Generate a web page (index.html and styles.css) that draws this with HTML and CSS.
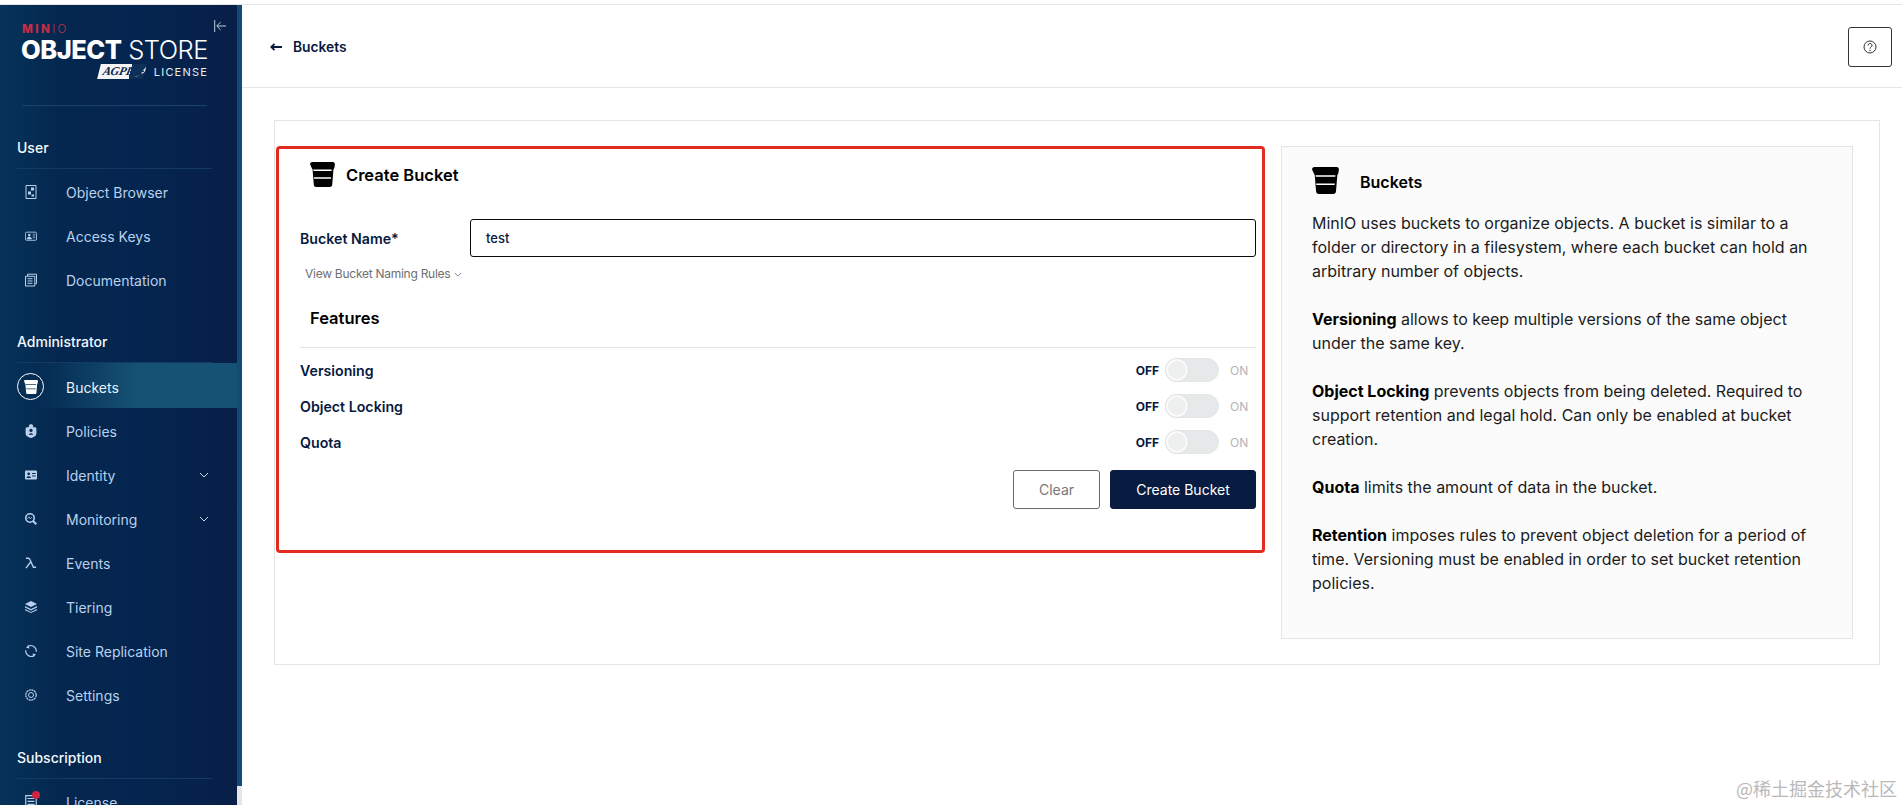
FILE: index.html
```
<!DOCTYPE html>
<html lang="en">
<head>
<meta charset="utf-8">
<title>MinIO Console - Create Bucket</title>
<link rel="stylesheet" href="styles.css">
</head>
<body>
<svg class="defs" width="0" height="0" aria-hidden="true">
  <symbol id="bucket" viewBox="0 0 25 25">
    <path fill="currentColor" d="M2.200 0h20.600c1.300 0 2.200 1 2.100 2.300l-.5 3.500c-.1.600-.4 1-.9 1.300l-1.300 15.600c-.1 1.300-1.100 2.300-2.400 2.300H6.200c-1.300 0-2.300-1-2.400-2.300L2.500 7.100c-.5-.3-.8-.7-.9-1.300L.1 2.300C0 1 .9 0 2.200 0z"/>
    <path class="bucket-gap" d="M3.300 7.600h18.400l-.15 1.500H3.450zM3.900 15.200h17.200l-.15 1.500H4.050z"/>
  </symbol>
  <symbol id="chev" viewBox="0 0 10 6"><path d="M1 1l4 4 4-4" fill="none" stroke="currentColor" stroke-width="1"/></symbol>
</svg>
<div class="topline"></div>
<div class="app">
  <aside class="sidebar">
    <div class="sidebar-inner">
      <div class="brand">
        <svg class="collapse" viewBox="0 0 12 12"><path d="M.7 0v12M12 6H3M6.500 2.200L2.700 6l3.800 3.800" fill="none" stroke="currentColor" stroke-width="1"/></svg>
        <div class="brand-minio"><b>MIN</b>IO</div>
        <div class="brand-name"><b>OBJECT</b> <span>STORE</span></div>
        <div class="brand-license">
          <span class="agpl"><i>AGPL</i><svg viewBox="0 0 16 14"><path d="M1 13C7 12 13 8 15 1c-1 0-3 1-4 2 0 1-1 2-2 3 1 0 2 0 2 1-1 1-2 1-3 1 1 1 1 1 1 2-2 1-5 2-8 3z" fill="#fff"/></svg></span>
          <span class="license">LICENSE</span>
        </div>
      </div>
      <div class="section section-first">User</div>
      <nav>
        <a class="item"><span class="ico"><svg viewBox="0 0 12 14"><path d="M1 .5h10v13H1z" fill="none" stroke="currentColor"/><path d="M6 2.500h3v3H6zM3 6.500h3v3H3zM6.500 9.500h2.500v2H6.500z" fill="currentColor"/></svg></span>Object Browser</a>
        <a class="item"><span class="ico"><svg viewBox="0 0 14 12"><rect x=".5" y="1.500" width="13" height="9.500" rx="1.500" fill="none" stroke="currentColor"/><circle cx="5" cy="4.800" r="1.500" fill="currentColor"/><path d="M2.500 9.500c0-3 5-3 5 0zM9 4h3M9 6h3M9 8h3" fill="currentColor" stroke="currentColor" stroke-width=".8"/></svg></span>Access Keys</a>
        <a class="item"><span class="ico"><svg viewBox="0 0 12 13"><path d="M2.500 2.500V.7h9v9.500H10M.5 2.800h9.300v9.700H.5z" fill="none" stroke="currentColor"/><path d="M2.500 5.200h5M2.500 7.500h5M2.500 9.800h5" stroke="currentColor"/></svg></span>Documentation</a>
      </nav>
      <div class="section section-next">Administrator</div>
      <nav>
        <a class="item active"><span class="ico-ring"><svg><use href="#bucket"/></svg></span>Buckets</a>
        <a class="item"><span class="ico"><svg viewBox="0 0 10 13"><path d="M3 3V2c0-2.300 4-2.300 4 0v1h1.500c1 0 1.500.6 1.500 1.500V9c0 2-3 3.500-5 4-2-.5-5-2-5-4V4.500C0 3.600.5 3 1.500 3z" fill="currentColor"/><circle cx="5" cy="6" r="1.500" fill="#0a2a52"/><path d="M3 10c0-2 4-2 4 0z" fill="#0a2a52"/></svg></span>Policies</a>
        <a class="item"><span class="ico"><svg viewBox="0 0 12 9"><path d="M1 0h10a1 1 0 0 1 1 1v7a1 1 0 0 1-1 1H1a1 1 0 0 1-1-1V1a1 1 0 0 1 1-1z" fill="currentColor"/><circle cx="3.700" cy="3.300" r="1.400" fill="#0a2a52"/><path d="M1.500 7.500c0-2.400 4.400-2.400 4.400 0zM7 2.500h3.700v1H7zM7 5h3.700v1H7z" fill="#0a2a52"/></svg></span>Identity<svg class="chev"><use href="#chev"/></svg></a>
        <a class="item"><span class="ico"><svg viewBox="0 0 12 12"><circle cx="5" cy="5" r="4.200" fill="none" stroke="currentColor" stroke-width="1.600"/><path d="M8 8l3.300 3.300" stroke="currentColor" stroke-width="2"/><path d="M2.500 5.500L4 3.800l1.200 2L7 4" fill="none" stroke="currentColor" stroke-width=".8"/></svg></span>Monitoring<svg class="chev"><use href="#chev"/></svg></a>
        <a class="item"><span class="ico"><svg viewBox="0 0 12 11"><path d="M1 .7h2.200c1 0 1.400.5 1.800 1.500l3.400 7.600h2.600M5.800 4.200L1 10.700" fill="none" stroke="currentColor" stroke-width="1.400"/></svg></span>Events</a>
        <a class="item"><span class="ico"><svg viewBox="0 0 12 12"><path d="M6 0l6 3-6 3-6-3z" fill="currentColor"/><path d="M0 5l6 3 6-3v1.500L6 9.500 0 6.500zM0 8l6 3 6-3v1.200L6 12 0 9.200z" fill="currentColor"/></svg></span>Tiering</a>
        <a class="item"><span class="ico"><svg viewBox="0 0 12 12"><path d="M9.600 2.200A5.400 5.400 0 0 0 2.800 1.600M.7 5.200a5.400 5.400 0 0 0 1.600 4.500M2.400 9.800A5.400 5.400 0 0 0 9.200 10.400M11.300 6.800A5.400 5.400 0 0 0 9.700 2.300" fill="none" stroke="currentColor" stroke-width="1.200"/><path d="M3.600 0L1 2.800l3.400.8zM8.400 12L11 9.200l-3.400-.8z" fill="currentColor"/></svg></span>Site Replication</a>
        <a class="item"><span class="ico"><svg viewBox="0 0 12 12"><circle cx="6" cy="6" r="5.200" fill="none" stroke="currentColor" stroke-width="1.200" stroke-dasharray="2.200 .5"/><circle cx="6" cy="6" r="2.500" fill="none" stroke="currentColor"/></svg></span>Settings</a>
      </nav>
      <div class="section section-last">Subscription</div>
      <nav>
        <a class="item"><span class="ico ico-badge"><svg viewBox="0 0 10 12"><path d="M.5.500h9v11h-9z" fill="none" stroke="currentColor"/><path d="M2 3h6M2 5.500h6M2 8h6" stroke="currentColor"/></svg><em class="dot"></em></span>License</a>
      </nav>
    </div>
    <div class="rail"><div class="thumb"></div></div>
  </aside>
  <main class="main">
    <header class="header">
      <a class="back"><svg viewBox="0 0 12 8"><path d="M12 4H2M4.500 .8L1.200 4l3.300 3.200" fill="none" stroke="currentColor" stroke-width="1.800"/></svg>Buckets</a>
      <button class="help" type="button" aria-label="Help"><svg viewBox="0 0 14 14"><circle cx="7" cy="7" r="6" fill="none" stroke="currentColor"/><path d="M5 5.500a2 2 0 1 1 3 1.700c-.7.400-1 .8-1 1.500" fill="none" stroke="currentColor"/><circle cx="7" cy="10.500" r=".7" fill="currentColor"/></svg></button>
    </header>
    <section class="panel">
      <form class="form">
        <h2 class="form-title"><svg class="bucket-lg"><use href="#bucket"/></svg>Create Bucket</h2>
        <div class="name-row">
          <label class="row-label" for="bucket-name">Bucket Name*</label>
          <div class="input" id="bucket-name">test</div>
        </div>
        <div class="rules">View Bucket Naming Rules<svg><use href="#chev"/></svg></div>
        <h3 class="features">Features</h3>
        <div class="rule"></div>
        <div class="toggle-row"><span class="row-label">Versioning</span><span class="off">OFF</span><span class="track"><span class="knob"></span></span><span class="on">ON</span></div>
        <div class="toggle-row"><span class="row-label">Object Locking</span><span class="off">OFF</span><span class="track"><span class="knob"></span></span><span class="on">ON</span></div>
        <div class="toggle-row"><span class="row-label">Quota</span><span class="off">OFF</span><span class="track"><span class="knob"></span></span><span class="on">ON</span></div>
        <div class="actions">
          <button class="btn btn-clear" type="button">Clear</button>
          <button class="btn btn-primary" type="button">Create Bucket</button>
        </div>
      </form>
      <aside class="info">
        <h2 class="info-title"><svg class="bucket-info"><use href="#bucket"/></svg><span>Buckets</span></h2>
        <p>MinIO uses buckets to organize objects. A bucket is similar to a folder or directory in a filesystem, where each bucket can hold an arbitrary number of objects.</p>
        <p><b>Versioning</b> allows to keep multiple versions of the same object under the same key.</p>
        <p><b>Object Locking</b> prevents objects from being deleted. Required to support retention and legal hold. Can only be enabled at bucket creation.</p>
        <p><b>Quota</b> limits the amount of data in the bucket.</p>
        <p><b>Retention</b> imposes rules to prevent object deletion for a period of time. Versioning must be enabled in order to set bucket retention policies.</p>
      </aside>
    </section>
  </main>
</div>
<div class="watermark">@稀土掘金技术社区</div>
</body>
</html>
```
FILE: styles.css
```
* { box-sizing: border-box; }
html, body { margin: 0; height: 805px; overflow: hidden; background: #fff; }
body { font-family: Inter, "Noto Sans", sans-serif; color: #07193e; position: relative; }
.defs { position: absolute; }
.topline { height: 5px; border-bottom: 1px solid #e5e5e5; }
.app { display: flex; height: 800px; }
.bucket-gap { fill: var(--gap, #fff); }

.sidebar { width: 242px; flex: none; display: flex; height: 800px; overflow: hidden; }
.sidebar-inner { width: 237px; flex: none; background: linear-gradient(90deg, #07335a 0%, #04274f 25%, #04254f 60%, #081f48 100%); height: 800px; overflow: hidden; color: #b9d1ec; }
.rail { width: 5px; flex: none; background: #e6e6e6; }
.thumb { height: 781px; background: #134a76; }

.brand { position: relative; height: 101px; border-bottom: 1px solid #1d4468; margin: 0 30px 0 22px; padding-top: 19px; color: #fff; }
.collapse { position: absolute; left: 192px; top: 15px; width: 12px; height: 12px; color: #b9cde0; }
.brand-minio { font-size: 11.500px; line-height: 10px; height: 10px; letter-spacing: 2.400px; color: #c72c48; font-weight: 300; }
.brand-minio b { font-weight: 800; }
.brand-name { font-size: 25.500px; line-height: 24px; margin-top: 4px; margin-left: -1px; white-space: nowrap; letter-spacing: -.5px; }
.brand-name b { font-weight: 800; }
.brand-name span { font-weight: 300; }
.brand-license { display: flex; justify-content: flex-end; align-items: center; gap: 9px; margin-top: 2px; height: 15px; }
.agpl { display: flex; align-items: center; width: 46px; height: 15px; background: linear-gradient(90deg, #f4f4f4 68%, #0e2f58 68%); transform: skewX(-14deg); overflow: hidden; }
.agpl i { font: italic 700 12px/15px "Liberation Serif", serif; color: #0b2450; padding-left: 4px; letter-spacing: -.3px; }
.agpl svg { width: 15px; height: 13px; flex: none; margin-left: 1px; }
.license { font-size: 11px; letter-spacing: 1.200px; color: #e7edf3; font-weight: 400; margin-right: -1px; }

.section { margin: 31px 25px 0 16px; height: 31px; line-height: 20px; padding-left: 1px; font-size: 14px; font-weight: 450; color: #f4f8fc; border-bottom: 1px solid #153a62; }
.section-first { margin-top: 32px; }
.section-next { margin-top: 30px; }
.section-last { margin-top: 31px; }
nav { padding-top: 1px; }
.item { display: flex; align-items: center; height: 44px; font-size: 14px; color: #b9d1ec; font-weight: 400; padding-left: 66px; position: relative; white-space: nowrap; }
.ico, .ico-ring { position: absolute; display: flex; align-items: center; justify-content: center; }
.ico { left: 22px; top: 13px; width: 18px; height: 18px; }
.ico svg { width: 12px; height: 14px; }
.ico-badge .dot { position: absolute; left: 10px; top: -2px; width: 8px; height: 8px; border-radius: 50%; background: #d1233f; }
.active { background: linear-gradient(90deg, rgba(21, 82, 116, 0) 15%, #155274 58%, #155274 100%); color: #e8f1fa; height: 45px; margin-top: -1px; padding-top: 4px; margin-bottom: 1px; }
.ico-ring { left: 17px; top: 10px; width: 27px; height: 27px; border: 1px solid #fff; border-radius: 50%; color: #fff; --gap: #0d3d63; }
.ico-ring svg { width: 14px; height: 14px; }
.chev { width: 10px; height: 6px; position: absolute; left: 199px; top: 19px; color: #c6d8ea; }

.main { flex: 1; min-width: 0; }
.header { height: 83px; border-bottom: 1px solid #e5e5e5; display: flex; align-items: center; justify-content: space-between; padding: 0 10px 0 28px; }
.back { display: flex; align-items: center; font-size: 13.800px; font-weight: 600; color: #07193e; padding-top: 2px; }
.back svg { width: 12px; height: 8px; margin-right: 11px; }
.help { width: 44px; height: 40px; margin-top: 1px; padding: 0; background: #fff; border: 1px solid #333; border-radius: 3px; color: #333; display: flex; align-items: center; justify-content: center; }
.help svg { width: 14px; height: 14px; }

.panel { margin: 32px 22px 0 32px; height: 545px; border: 1px solid #e5e5e5; display: flex; align-items: flex-start; gap: 16px; padding: 25px 26px 0 1px; }
.form { width: 989px; height: 407px; flex: none; border: 3px solid #e32b1f; border-radius: 4px; padding: 13px 6px 0 21px; }
.form-title { display: flex; align-items: center; margin: 0; height: 25px; padding-left: 10px; font-size: 16.500px; font-weight: 600; color: #000; }
.bucket-lg { width: 25px; height: 25px; margin-right: 11px; color: #000; }
.name-row { display: flex; align-items: center; margin-top: 32px; }
.row-label { font-size: 14.200px; font-weight: 600; color: #07193e; white-space: nowrap; padding-top: 1px; }
.name-row .row-label { width: 170px; flex: none; }
.input { flex: 1; height: 38px; border: 1.500px solid #0a0a0a; border-radius: 3px; padding-left: 15px; line-height: 37px; font-size: 13px; font-weight: 500; color: #07193e; }
.rules { display: flex; align-items: center; margin: 8px 0 0 5px; height: 16px; font-size: 12px; letter-spacing: -.26px; color: #6f6f6f; }
.rules svg { width: 8px; height: 5px; margin-left: 4px; margin-top: 2px; }
.features { margin: 27px 0 0 10px; height: 20px; line-height: 20px; font-size: 16.500px; font-weight: 600; color: #000; }
.rule { height: 1px; background: #e2e2e2; margin-top: 19px; }
.toggle-row { display: flex; align-items: center; height: 36px; }
.rule + .toggle-row { margin-top: 4px; }
.off { font-size: 12px; font-weight: 700; color: #07193e; margin-left: auto; }
.track { width: 54px; height: 24px; margin-left: 6px; border-radius: 12px; background: #e6e9ea; border: 1px solid #e2e6e7; position: relative; }
.knob { position: absolute; left: 0; top: 0; width: 22px; height: 22px; border-radius: 50%; background: #eef0f0; border: 2px solid #fafafa; box-shadow: 0 0 0 1px #e2e2e2; }
.on { font-size: 12px; font-weight: 400; color: #b4b4b4; width: 25px; margin-left: 11px; margin-right: 1px; }
.actions { display: flex; justify-content: flex-end; gap: 10px; margin-top: 10px; }
.btn { height: 39px; border-radius: 3px; font: 400 14px Inter, sans-serif; padding: 0; }
.btn-clear { width: 87px; background: #fff; border: 1px solid #696969; color: #777; }
.btn-primary { width: 146px; background: #081c42; border: 1px solid #081c42; color: #fff; }

.info { width: 572px; height: 493px; flex: none; background: #fbfbfb; border: 1px solid #e5e5e5; padding: 20px 38px 0 30px; color: #1c1c1c; }
.info-title { display: flex; align-items: center; margin: 0 0 17px; height: 27px; font-size: 16px; font-weight: 600; color: #000; }
.info-title span { padding-top: 2px; }
.bucket-info { width: 27px; height: 27px; margin-right: 21px; color: #000; }
.info p { margin: 0 0 24px; font-size: 16px; line-height: 24px; font-weight: 400; }
.info b { font-weight: 700; color: #000; }

.watermark { position: absolute; left: 1736px; top: 776px; font: 400 18px/24px "Noto Sans CJK SC", sans-serif; color: #b9b9b9; white-space: nowrap; }
```
